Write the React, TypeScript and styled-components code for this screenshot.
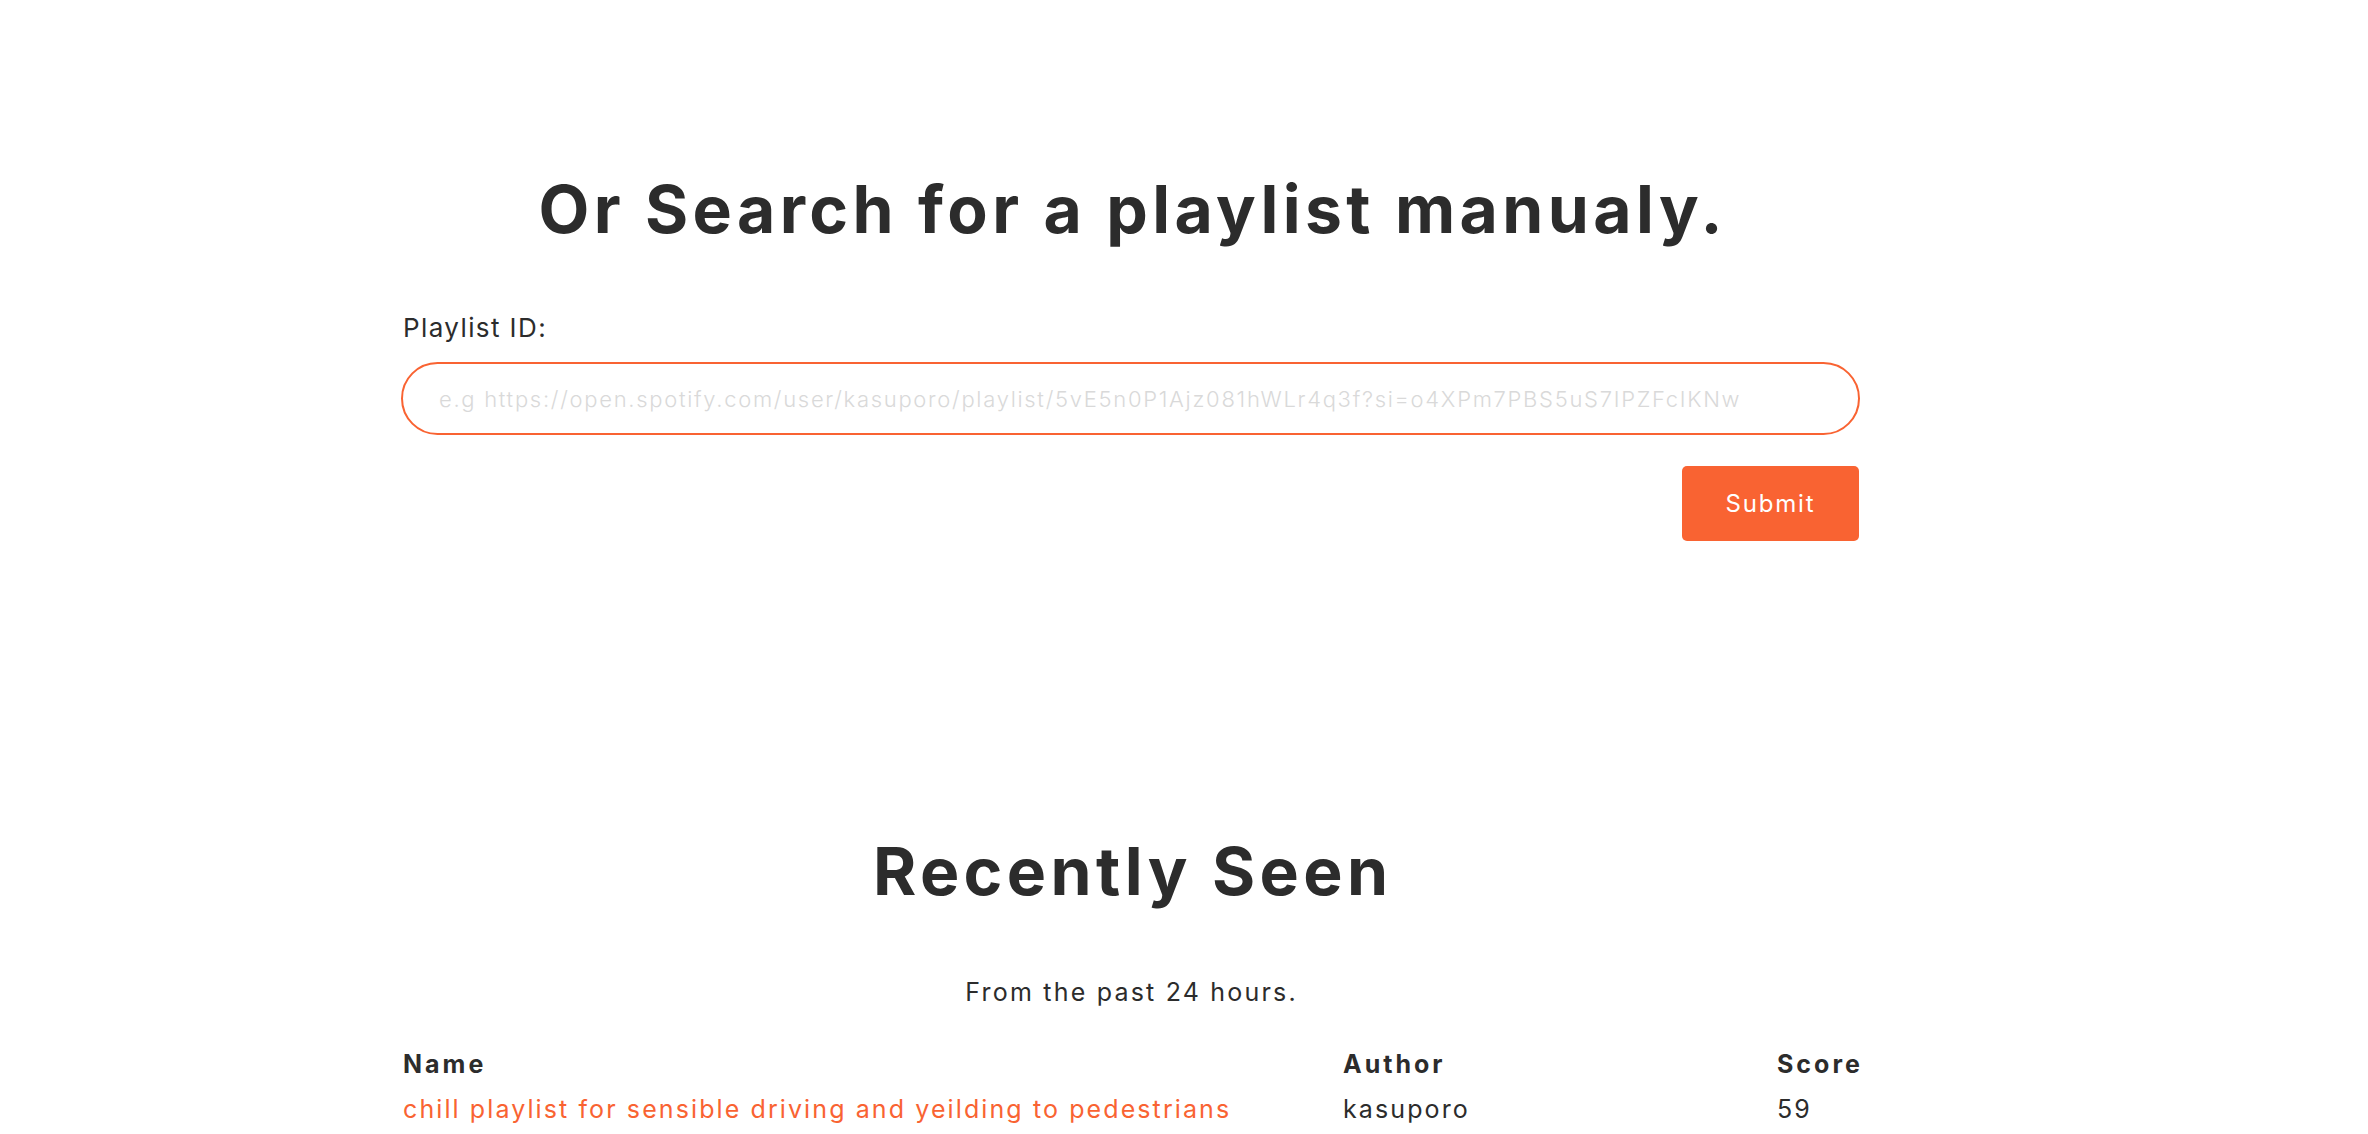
import React from "react";
import styled, { createGlobalStyle } from "styled-components";

const GlobalStyle = createGlobalStyle`
  html, body {
    margin: 0;
    padding: 0;
    background: #ffffff;
    font-family: Inter, "Open Sans", sans-serif;
    color: #2c2c2c;
  }
`;

const Page = styled.main`
  width: 1459px;
  margin-left: 401px;
  display: flex;
  flex-direction: column;
`;

const Heading = styled.h2<{ $top: number }>`
  margin: ${(p) => p.$top}px 0 0;
  font-family: Inter, sans-serif;
  font-weight: 700;
  font-size: 66px;
  line-height: 80px;
  letter-spacing: 4.4px;
  text-indent: 4.4px;
  text-align: center;
  color: #2c2c2c;
`;

const Form = styled.form`
  display: flex;
  flex-direction: column;
  margin-top: 63px;
`;

const Label = styled.label`
  font-family: Inter, sans-serif;
  font-size: 26px;
  line-height: 32px;
  font-weight: 400;
  letter-spacing: 1.4px;
  color: #2c2c2c;
  padding-left: 2px;
`;

const Input = styled.input`
  box-sizing: border-box;
  margin-top: 18px;
  height: 73px;
  width: 100%;
  border: 2px solid #f96332;
  border-radius: 40px;
  padding: 0 36px;
  font-family: Inter, sans-serif;
  font-size: 22px;
  font-weight: 300;
  letter-spacing: 1.7px;
  color: #2c2c2c;
  caret-color: #2c2c2c;
  outline: none;
  background: #fff;
  &::placeholder {
    color: #d9d9d9;
  }
`;

const Actions = styled.div`
  display: flex;
  justify-content: flex-end;
  margin-top: 31px;
  padding-right: 1px;
`;

const SubmitButton = styled.button`
  width: 177px;
  height: 75px;
  border: none;
  border-radius: 5px;
  background: #f96332;
  color: #ffffff;
  font-family: Inter, sans-serif;
  font-size: 24px;
  font-weight: 400;
  letter-spacing: 1.8px;
  cursor: pointer;
`;

const Subtitle = styled.p`
  margin: 65px 0 0;
  text-align: center;
  font-family: Inter, sans-serif;
  font-size: 25px;
  line-height: 32px;
  letter-spacing: 2.2px;
  text-indent: 2.2px;
  color: #2c2c2c;
`;

const Table = styled.div`
  display: grid;
  grid-template-columns: 940px 434px 1fr;
  margin-top: 34px;
  padding-left: 2px;
`;

const Cell = styled.div<{ $head?: boolean; $link?: boolean }>`
  font-family: Inter, sans-serif;
  font-size: 25px;
  line-height: 45px;
  font-weight: ${(p) => (p.$head ? 700 : 400)};
  letter-spacing: ${(p) => (p.$head ? "3px" : "2.1px")};
  color: ${(p) => (p.$link ? "#f96332" : "#2c2c2c")};
  white-space: nowrap;
`;

const rows = [
  {
    name: "chill playlist for sensible driving and yeilding to pedestrians",
    author: "kasuporo",
    score: 59,
  },
];

export default function App() {
  return (
    <>
      <GlobalStyle />
      <Page>
        <Heading $top={169}>Or Search for a playlist manualy.</Heading>
        <Form onSubmit={(e) => e.preventDefault()}>
          <Label htmlFor="playlist">Playlist ID:</Label>
          <Input
            id="playlist"
            autoFocus
            placeholder="e.g https://open.spotify.com/user/kasuporo/playlist/5vE5n0P1Ajz081hWLr4q3f?si=o4XPm7PBS5uS7IPZFcIKNw"
          />
          <Actions>
            <SubmitButton type="submit">Submit</SubmitButton>
          </Actions>
        </Form>
        <Heading $top={290}>Recently Seen</Heading>
        <Subtitle>From the past 24 hours.</Subtitle>
        <Table>
          <Cell $head>Name</Cell>
          <Cell $head>Author</Cell>
          <Cell $head>Score</Cell>
          {rows.map((r) => (
            <React.Fragment key={r.name}>
              <Cell $link>{r.name}</Cell>
              <Cell>{r.author}</Cell>
              <Cell>{r.score}</Cell>
            </React.Fragment>
          ))}
        </Table>
      </Page>
    </>
  );
}
